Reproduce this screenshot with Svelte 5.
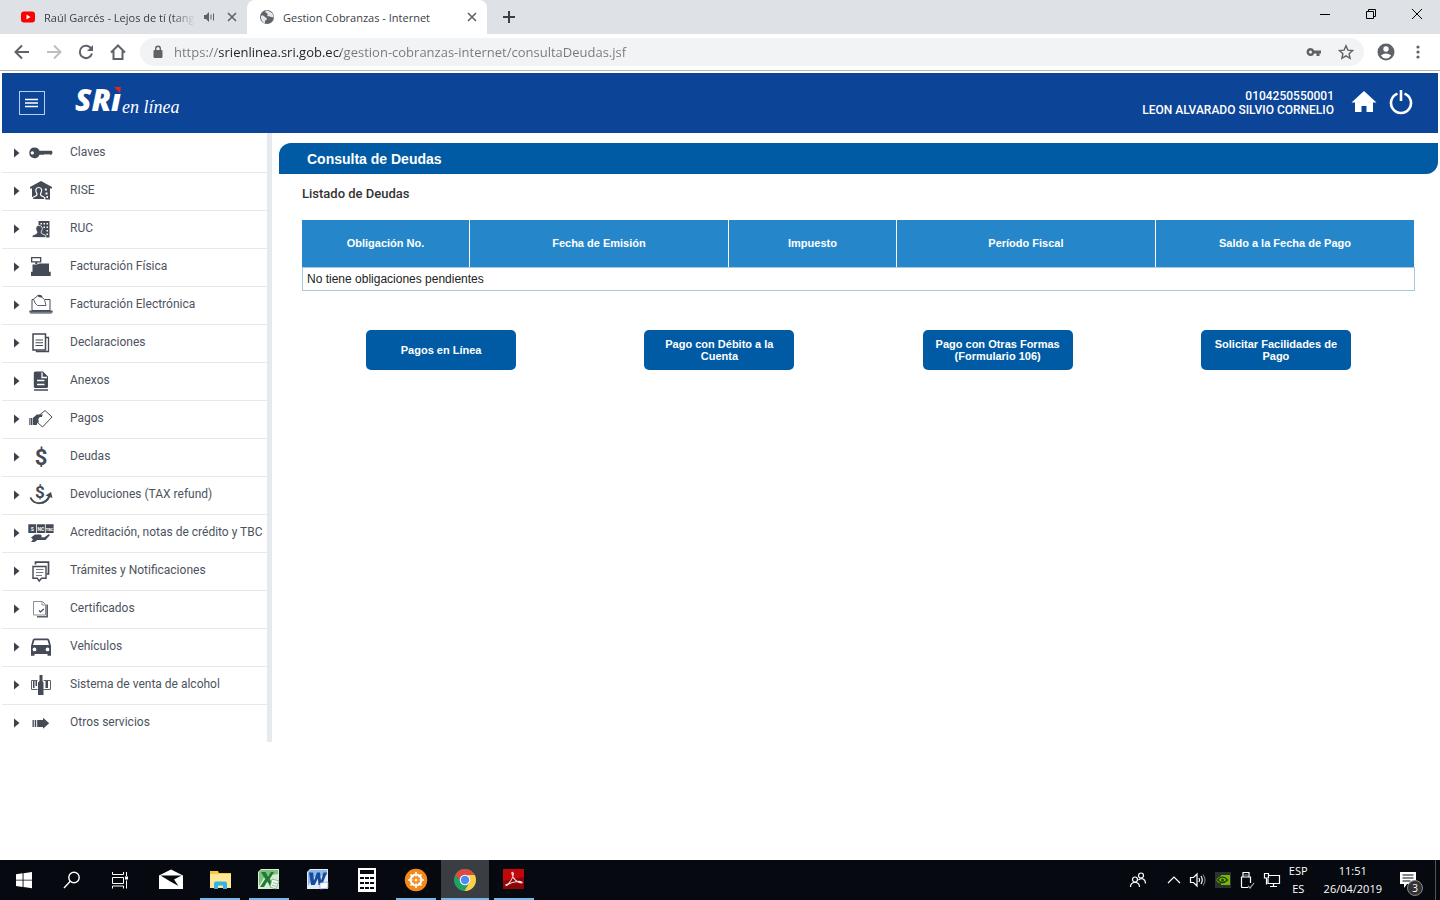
<script lang="ts">
    const url = 'https://srienlinea.sri.gob.ec/gestion-cobranzas-internet/consultaDeudas.jsf';

    const menu = [
        {
            label: 'Claves',
            icon: '<path fill-rule="evenodd" d="M6.500 7.500a5.300 5.300 0 0 1 5 3.300H24l.5 2-1 2h-1.500l-1-1-1 1.200-1-1.200-1 1.200-1-1.200-1 1h-4.500a5.300 5.300 0 1 1-5-7.300zM4.300 11.200a1.700 1.700 0 1 0 0 3.400 1.700 1.700 0 0 0 0-3.400z"/>'
        },
        {
            label: 'RISE',
            icon: '<path d="M2 9 L13 3 L24 9 V10.500 H2z M4 10h18v11.500H4z"/><path d="M16.800 10.500h2v2h-2zM17.500 14.500h2v2h-2zM18.500 18H20v2h-1.500z" fill="#fff"/><path d="M10.700 9.500c-2.500 0-3.200 2-2.700 4l1 2.500-.5 1.500-4 2v2h12.300v-2l-3.800-2-.5-1.500 1-2.500c.5-2-.3-4-2.800-4z" stroke="#fff" stroke-width="1.200"/>'
        },
        {
            label: 'RUC',
            icon: '<path d="M10.500 5h11v16.500h-11z"/><path d="M12.500 7h1.500v1.500h-1.500zM15.500 7H17v1.500h-1.500zM18.500 7H20v1.500h-1.500zM15.500 10.500H17V12h-1.500zM18.500 10.500H20V12h-1.500zM18.500 14H20v1.500h-1.500zM18.500 17.500H20V19h-1.500z" fill="#fff"/><path d="M10.800 9.500c-2.600 0-3.300 2-2.900 4l1.100 2.700-.5 1.300-4.300 2v2h13.600v-2l-4.200-2-.5-1.300 1.100-2.700c.5-2-.4-4-3.400-4z" stroke="#fff" stroke-width=".8"/>'
        },
        {
            label: 'Facturación Física',
            icon: '<path fill-rule="evenodd" d="M3 3h10.300v5.500H3zM4.300 4.300v2.900h7.700V4.300z"/><path d="M7.300 8h2v2h-2z"/><path d="M4.500 10.500h4l3-1H21v8.200h1.700v4.200H3v-4.200h1.500z"/>'
        },
        {
            label: 'Facturación Electrónica',
            icon: '<path d="M6 7.500H4v11h18v-11h-5" fill="none" stroke="#444a56"/><path d="M5.500 7l4-3 3.500.5 3.500 3 1.500 6H9.500L7 11z" fill="#fff" stroke="#5b616b"/><path d="M9 3.500c2-1.500 5-.5 5.500 1.500l-2.500.5z"/><path d="M1.500 19h23v1.300l-1 1.500H2.500l-1-1.500z" fill="#767b84"/><path d="M1.500 18.500h23v1.200h-23z"/>'
        },
        {
            label: 'Declaraciones',
            icon: '<path d="M18 7.500h2.500v14h-12V20" fill="none" stroke="#444a56" stroke-width="1.300"/><path d="M5 4h12.500v16H5z" fill="none" stroke="#444a56" stroke-width="1.500"/><path d="M7.500 9.500h7.500v1H7.500zM7.500 12.200h7.500v1H7.500zM7.500 15h7.500v1H7.500z"/>'
        },
        {
            label: 'Anexos',
            icon: '<path d="M7 3.500h8l5 5v10q0 1.500-1.500 1.500H7.300q-1.500 0-1.500-1.500V5q0-1.500 1.500-1.500zM6 21.300h14v1.400H6z"/><path d="M14 4.500v5h5M9 12.500h7.500M9 16.500h7.500" fill="none" stroke="#fff" stroke-width="1.300"/>'
        },
        {
            label: 'Pagos',
            icon: '<path d="M11 9.500l6-5 7 6.500-9.500 10-6-5.500" fill="none" stroke="#444a56"/><path d="M1.300 12h1.200v7H1.300zM3 12h1.200v7H3zM4.800 12l4-3.500h6l-1 2.500h-2l-1.500 2 .5 3-1.500 1-.5 2h-4z"/>'
        },
        {
            label: 'Deudas',
            icon: '<text x="13" y="21" font-size="22" font-weight="700" text-anchor="middle">$</text>'
        },
        {
            label: 'Devoluciones (TAX refund)',
            icon: '<text x="12" y="16" font-size="17" font-weight="700" text-anchor="middle">$</text><path d="M2.500 15.500c3 7.500 15 8 19-1.500" fill="none" stroke="#444a56" stroke-width="2"/><path d="M17.500 13.500l5.500-3.500 1.500 6z"/>'
        },
        {
            label: 'Acreditación, notas de crédito y TBC',
            icon: '<path d="M.3 4.300h7.900V13H.3zM9 4.300h7.900V13H9zM17.700 4.300h7.900V13h-7.900z"/><g fill="#fff" font-size="5" font-weight="700" text-anchor="middle"><text x="4.300" y="10.500">S</text><text x="13" y="10.500">NC</text><text x="21.600" y="10.500" font-size="4">TBC</text></g><path d="M3 17.500l4-3h5.500l1.500 1.500-1 1.200h3.500l4-3 1.500.8-4.500 5h-8l-3 2H3l2-2.500z"/>'
        },
        {
            label: 'Trámites y Notificaciones',
            icon: '<path d="M7.500 6.500V4.200h13V16h-2" fill="none" stroke="#444a56" stroke-width="1.700"/><path d="M5 8.500h13v11.700h-4.500l-2.300 2.800-2-2.800H5z" fill="none" stroke="#444a56" stroke-width="1.400"/><path d="M8 11.500h7.500M8 14.500h7.500M8 17.500h6" fill="none" stroke="#777c86"/>'
        },
        {
            label: 'Certificados',
            icon: '<path d="M5.500 5.500h9l3 3V19h-12z" fill="none" stroke="#8a8e96"/><path d="M14 5.500v3.500h3.500" fill="none" stroke="#8a8e96"/><path d="M18.300 8.500H20v13H9V20h9.300z" fill="#5b616b"/><path d="M11 14.500l1.500 1.500 3.300-3" fill="none" stroke="#444a56" stroke-width="1.200"/>'
        },
        {
            label: 'Vehículos',
            icon: '<path fill-rule="evenodd" d="M6 4.500h14l1.300 1.200L23 12v9.700h-3.500V20h-13v1.700H3V12l1.700-6.300zM6.500 6.300L5 11h16l-1.500-4.700zM6.500 13.500a1.900 1.900 0 1 0 0 3.800 1.900 1.900 0 0 0 0-3.800zM19.500 13.500a1.900 1.900 0 1 0 0 3.800 1.900 1.900 0 0 0 0-3.800z"/>'
        },
        {
            label: 'Sistema de venta de alcohol',
            icon: '<path d="M9.500 8.500h-6v9h6M15.500 8.500h7v9h-7" fill="none" stroke="#5b616b"/><path d="M5 9h1.500v7H5zM7.500 9H9v5H7.500zM17.500 9h2.500v7h-2.500zM11.500 3h3v6l1 1.500V23H10V10.500L11.500 9z"/>'
        },
        {
            label: 'Otros servicios',
            icon: '<path d="M4.500 10h1.300v7H4.500zM6.700 10h1.500v7H6.700zM9.200 10H15V7.700l6.200 5.600L15 18.700V17H9.200z"/>'
        }
    ];

    const columns = ['Obligación No.', 'Fecha de Emisión', 'Impuesto', 'Período Fiscal', 'Saldo a la Fecha de Pago'];

    const actions = [
        'Pagos en Línea',
        'Pago con Débito a la Cuenta',
        'Pago con Otras Formas (Formulario 106)',
        'Solicitar Facilidades de Pago'
    ];

    const system = [
        { name: 'Inicio', art: '<path d="M4 6.300l6.600-1v6.400H4zM11.500 5.200L20 4v7.700h-8.500zM4 12.600h6.600V19L4 18zM11.500 12.600H20v7.700L11.500 19z" fill="#fff"/>' },
        { name: 'Buscar', art: '<g fill="none" stroke="#fff" stroke-width="1.400"><circle cx="14" cy="9.500" r="5.200"/><path d="M10.300 13.300L4 20"/></g>' },
        { name: 'Vista de tareas', art: '<g fill="none" stroke="#fff"><path d="M4.500 4v2.500h11V4M4.500 9.500h11v6h-11zM4.500 20.500v-2.500h11v2.500M18.500 4v4M18.500 12.500v8"/></g><path d="M17 8.500h3v3h-3z" fill="#fff"/>' }
    ];

    const apps = [
        { name: 'Correo', open: false, active: false, art: '<path d="M0 7.500l12-6 12 6V21H0z" fill="#fff"/><path d="M1.500 7.500h21l-7.500 4 4.500 6.500-9-5z" fill="#060a10"/>' },
        { name: 'Explorador', open: true, active: false, art: '<path d="M2 3h8l1 2h12v15H2z" fill="#f5c842"/><path d="M2 6h21v14H2z" fill="#ffe793"/><path d="M6 21v-5.500q0-2 2-2h9q2 0 2 2V21h-4v-3.500h-5V21z" fill="#38b0e8"/>' },
        { name: 'Excel', open: true, active: false, art: '<path d="M4 1h18v20H1V4z" fill="#d8ecd5"/><path d="M4 2h17v4L8 8 2 18V4z" fill="#7cc27c"/><path d="M4 4h4.500l2.500 4.500L14 4h3l-4.200 7 5.200 8h-4.500l-3.200-5.500L7 19H3l5.200-8z" fill="#237a33"/><path d="M15 11l7 2-3 8-6-2zM16 14.500l4 1.300M15 17l4 1.300" fill="#f3f9f1" stroke="#73ae77" stroke-width=".8"/>' },
        { name: 'Word', open: false, active: false, art: '<path d="M4 1h18v20H1V4z" fill="#e3edf9"/><path d="M4 2h17v5L8 9 2 18V4z" fill="#8db6e8"/><path d="M3 4.500h4l1 8 3-8h3l1 8 2.500-8H21l-5 12.500h-3.500l-.7-6.500-3 6.500H5z" fill="#164ba0"/><path d="M14 15l8-1v6l-8 1z" fill="#fff" stroke="#7aa2d8" stroke-width=".7"/>' },
        { name: 'Calculadora', open: false, active: false, art: '<path d="M3 0h18v24H3z" fill="#fff"/><path d="M5 2h14v4H5zM5 9h4v2H5zM10 9h4v2h-4zM15 9h4v2h-4zM5 14h4v2H5zM10 14h4v2h-4zM15 14h4v2h-4zM5 19h4v2H5zM10 19h4v2h-4zM15 19h4v2h-4z" fill="#060a10"/>' },
        { name: 'Timón', open: true, active: false, art: '<circle cx="12" cy="12" r="11.200" fill="#f58a1c"/><g fill="none" stroke="#fff"><circle cx="12" cy="12" r="5.500" stroke-width="2"/><path d="M12 4v16M4 12h16M6.500 6.500l11 11M17.500 6.500l-11 11" stroke-width="1.600"/></g><circle cx="12" cy="12" r="3.500" fill="#f58a1c"/><circle cx="12" cy="12" r="1.500" fill="#fff"/>' },
        { name: 'Chrome', open: true, active: true, art: '<circle cx="12" cy="12" r="11" fill="#1ea362"/><path d="M2.500 6.500A11 11 0 0 1 21.500 6.500L12 8l-4.500 6z" fill="#dd4b3e"/><path d="M21.800 7A11 11 0 0 1 11.500 23L16.500 14.500 14.500 7z" fill="#ffce44"/><circle cx="12" cy="12" r="5.300" fill="#fff"/><circle cx="12" cy="12" r="4.200" fill="#4c8bf5"/>' },
        { name: 'Acrobat', open: true, active: false, art: '<path d="M1 1h21v20H1z" fill="#8c0508"/><path d="M1 1h21v8L1 13z" fill="#c4070b"/><path d="M4 17c4-2 7-7 7.500-11.500q-2-2.500-1.500.5c1 5 5 8.500 9.500 9 2-1-1.500-2-4-1.500-5 .5-8 1.500-11 4-.8-.5-1-1-.5-.5z" fill="none" stroke="#f6dede" stroke-width="1.100"/>' }
    ];
</script>

<div class="screen">
    <header class="tabs">
        <div class="tab first">
            <svg width="16" height="16" viewBox="0 0 16 16"><rect x="1" y="2.500" width="14" height="11" rx="3" fill="#f00" /><path d="M6.500 5.500v5l4-2.500z" fill="#fff" /></svg>
            <span class="tab-name faded">Raúl Garcés - Lejos de tí (tang</span>
            <svg width="12" height="12" viewBox="0 0 12 12"><path d="M1 4h2l3-3v10L3 8H1z" fill="#5f6368" /><path d="M8 3.500v5M10.500 2.500v7" stroke="#5f6368" /></svg>
            <button class="close" aria-label="Cerrar pestaña"><svg width="10" height="10" viewBox="0 0 10 10"><path d="M1 1l8 8M9 1l-8 8" /></svg></button>
        </div>
        <div class="tab current">
            <svg width="16" height="16" viewBox="0 0 16 16"><circle cx="8" cy="8" r="7" fill="#5f6368" /><path d="M2 7c2-1 3 0 4 1s2 1 2 2-2 1-2 2 0 2-.5 2.500C3 13 1.500 10 2 7zM7 1.500c-1 1-1 2 .5 2.500S9 6 8 7l3 .5c1 1 2 .5 3.500 1 .3-3-2-6.500-7.500-7z" fill="#e4e6e8" /></svg>
            <span class="tab-name">Gestion Cobranzas - Internet</span>
            <button class="close" aria-label="Cerrar pestaña"><svg width="10" height="10" viewBox="0 0 10 10"><path d="M1 1l8 8M9 1l-8 8" /></svg></button>
        </div>
        <button class="new-tab" aria-label="Nueva pestaña"><svg width="12" height="12" viewBox="0 0 12 12"><path d="M6 0v12M0 6h12" stroke="#3c4043" stroke-width="2" /></svg></button>
        <div class="window-controls">
            <button aria-label="Minimizar"><svg width="12" height="12" viewBox="0 0 12 12"><path d="M1 6.500h10" /></svg></button>
            <button aria-label="Restaurar"><svg width="12" height="12" viewBox="0 0 12 12"><path d="M1.500 3.500h7v7h-7zM3.500 3.500v-2h7v7h-2" /></svg></button>
            <button aria-label="Cerrar"><svg width="12" height="12" viewBox="0 0 12 12"><path d="M1 1l10 10M11 1L1 11" /></svg></button>
        </div>
    </header>

    <nav class="toolbar" aria-label="Navegador">
        <button aria-label="Atrás"><svg width="16" height="16" viewBox="0 0 16 16"><path d="M15 8H2M8 1.500L1.500 8 8 14.500" /></svg></button>
        <button class="off" aria-label="Adelante"><svg width="16" height="16" viewBox="0 0 16 16"><path d="M1 8h13M8 1.500L14.500 8 8 14.500" /></svg></button>
        <button aria-label="Recargar"><svg width="16" height="16" viewBox="0 0 16 16"><path d="M13.500 5A6.200 6.200 0 1 0 14 9.500" /><path d="M15 1v6H9z" fill="#5f6368" stroke="none" /></svg></button>
        <button aria-label="Página principal"><svg width="16" height="16" viewBox="0 0 16 16"><path d="M1 8.500L8 1.500l7 7M3.500 7v8h9V7" /></svg></button>
        <div class="omnibox">
            <svg width="12" height="14" viewBox="0 0 12 14"><path d="M2.500 5h7q1 0 1 1v6q0 1-1 1h-7q-1 0-1-1V6q0-1 1-1z" fill="#5f6368" /><path d="M3.700 5V3.500a2.300 2.300 0 0 1 4.600 0V5" fill="none" stroke="#5f6368" stroke-width="1.400" /></svg>
            <input type="text" value={url} aria-label="Dirección" />
            <svg width="16" height="16" viewBox="0 0 16 16"><path fill-rule="evenodd" d="M4.500 4a4 4 0 0 1 3.800 2.500H15v3h-1.500V12h-3V9.500H8.300A4 4 0 1 1 4.500 4zm0 2.500a1.500 1.500 0 1 0 0 3 1.500 1.500 0 0 0 0-3z" fill="#5f6368" /></svg>
            <svg width="16" height="16" viewBox="0 0 16 16"><path d="M8 1.800l1.900 4.300 4.700.5-3.500 3.100 1 4.600L8 11.900l-4.100 2.400 1-4.600L1.400 6.600l4.700-.5z" fill="none" stroke="#5f6368" stroke-width="1.400" /></svg>
        </div>
        <button class="account" aria-label="Perfil"><svg width="18" height="18" viewBox="0 0 18 18"><circle cx="9" cy="9" r="8.500" fill="#5f6368" stroke="none" /><circle cx="9" cy="6" r="2.700" fill="#fff" stroke="none" /><path d="M3.800 12.500q5.200-4 10.400 0-2 3-5.200 3t-5.200-3z" fill="#fff" stroke="none" /></svg></button>
        <button class="more" aria-label="Menú"><svg width="4" height="16" viewBox="0 0 4 16"><g fill="#5f6368" stroke="none"><circle cx="2" cy="3" r="1.600" /><circle cx="2" cy="8" r="1.600" /><circle cx="2" cy="13" r="1.600" /></g></svg></button>
    </nav>

    <div class="page">
        <header class="banner">
            <button class="burger" aria-label="Mostrar menú"><svg width="14" height="10" viewBox="0 0 14 10"><path d="M0 1.500h13M0 5h13M0 8.500h13" stroke="#fff" stroke-width="1.700" /></svg></button>
            <svg class="logo" width="110" height="44" viewBox="0 0 110 44" role="img" aria-label="SRi en línea">
                <text x="1" y="30" class="sri">SRı</text>
                <path d="M40 6h7l-1 6z" fill="#e1251b" />
                <text x="48" y="32" class="script">en línea</text>
            </svg>
            <div class="user">0104250550001<br />LEON ALVARADO SILVIO CORNELIO</div>
            <a href="#inicio" aria-label="Inicio"><svg width="26" height="24" viewBox="0 0 26 24"><path d="M13 0l12.500 11.500H22V21h-6.500v-6h-5v6H4v-9.500H.5z" fill="#fff" /></svg></a>
            <a href="#salir" aria-label="Salir"><svg width="24" height="26" viewBox="0 0 24 26"><path d="M8.500 3.600a10 10 0 1 0 7 0M12 0v11" fill="none" stroke="#fff" stroke-width="2.600" /></svg></a>
        </header>

        <div class="body">
            <nav class="sidebar" aria-label="Servicios">
                {#each menu as item}
                    <a href="#menu">
                        <svg class="arrow" width="6" height="10" viewBox="0 0 6 10"><path d="M0 .5l5.500 4.500L0 9.500z" fill="#3b414d" /></svg>
                        <svg class="icon" width="26" height="26" viewBox="0 0 26 26">{@html item.icon}</svg>
                        <span>{item.label}</span>
                    </a>
                {/each}
            </nav>

            <main>
                <h1>Consulta de Deudas</h1>
                <section>
                    <h2>Listado de Deudas</h2>
                    <table>
                        <thead>
                            <tr>
                                {#each columns as column}
                                    <th>{column}</th>
                                {/each}
                            </tr>
                        </thead>
                        <tbody>
                            <tr><td colspan={columns.length}>No tiene obligaciones pendientes</td></tr>
                        </tbody>
                    </table>
                    <div class="actions">
                        {#each actions as action}
                            <button>{action}</button>
                        {/each}
                    </div>
                </section>
            </main>
        </div>
    </div>

    <footer class="taskbar">
        <div class="system">
            {#each system as item}
                <button aria-label={item.name}><svg width="24" height="24" viewBox="0 0 24 24">{@html item.art}</svg></button>
            {/each}
        </div>
        <div class="apps">
            {#each apps as app}
                <button class:open={app.open} class:active={app.active} aria-label={app.name}><svg width="24" height="24" viewBox="0 0 24 24">{@html app.art}</svg></button>
            {/each}
        </div>
        <div class="tray">
            <svg class="people" width="18" height="18" viewBox="0 0 18 18"><circle cx="6" cy="8.500" r="2.500" /><path d="M1.500 16c0-6 9-6 9 0" /><circle cx="12" cy="4.500" r="2.500" /><path d="M9.500 9c3-3 7-1 7 3.500" /></svg>
            <svg width="14" height="14" viewBox="0 0 14 14"><path d="M1 10l6-6 6 6" /></svg>
            <svg width="18" height="16" viewBox="0 0 18 16"><path d="M1.500 5.500h3L8 2v12l-3.500-3.500h-3zM10 6q1.200 2 0 4M12 4q2.500 4 0 8" /><path d="M14 2.500q4 5.500 0 11" stroke="#777" /></svg>
            <svg width="16" height="16" viewBox="0 0 16 16"><path d="M0 0h16v16H0z" fill="#2b3234" stroke="none" /><path d="M6 3h9v10H6z" fill="#76b900" stroke="none" /><path d="M1 8q3-4 6-4 4 0 7 4-3 3.500-7 3.500T1 8z" fill="#76b900" stroke="none" /><path d="M2.500 8q5-6 10 0-5 5-10 0z" stroke="#1d3305" fill="none" /><circle cx="7.500" cy="8" r="1.300" fill="#1d3305" stroke="none" /></svg>
            <svg width="16" height="18" viewBox="0 0 16 18"><path d="M4 6V1.500h6V6M9 16.500H3.500q-1 0-1-1V6h9v6M6 3.500v1M8 3.500v1" /><path d="M9 15l2 2 4-5" stroke="#aaa" /></svg>
            <svg width="18" height="16" viewBox="0 0 18 16"><path d="M6 3.500h10.500v8H5V7M1.500 1.500h4V6h-4zM3.500 6v6.500M10.500 11.500v3M7 14.500h7" /></svg>
            <div class="lang">ESP<br />ES</div>
            <div class="clock">11:51<br />26/04/2019</div>
            <div class="notices">
                <svg width="18" height="18" viewBox="0 0 18 18"><path d="M1 1h16v12H8l-3 4v-4H1z" fill="#fff" stroke="none" /><path d="M3.500 4h11M3.500 7h11M3.500 10h8" stroke="#060a10" /></svg>
                <span>3</span>
            </div>
        </div>
    </footer>
</div>

<style>
    :global(body) {
        background: #fff;
    }
    .screen {
        display: flex;
        flex-direction: column;
        min-height: 100vh;
        font-family: Roboto, sans-serif;
    }
    button {
        padding: 0;
        border: 0;
        background: none;
        cursor: pointer;
    }
    svg {
        display: block;
        flex: none;
    }

    /* browser */
    .tabs {
        display: flex;
        height: 34px;
        background: #dee1e6;
        font-family: "Open Sans", sans-serif;
        font-size: 11px;
        color: #3c4043;
    }
    .tab {
        display: flex;
        align-items: center;
        box-sizing: border-box;
        width: 240px;
        gap: 8px;
        padding: 0 10px 0 12px;
    }
    .tab.first {
        width: 247px;
        padding-left: 20px;
    }
    .tab.current {
        background: #fff;
        border-radius: 8px 8px 0 0;
    }
    .tab-name {
        flex: 1;
        white-space: nowrap;
    }
    .faded {
        mask-image: linear-gradient(90deg, #000 85%, transparent);
    }
    .close {
        padding-left: 4px;
    }
    .close svg {
        stroke: #5f6368;
        stroke-width: 1.6;
    }
    .new-tab {
        width: 44px;
        display: grid;
        place-items: center;
    }
    .window-controls {
        display: flex;
        margin-left: auto;
    }
    .window-controls button {
        width: 46px;
        height: 28px;
        display: grid;
        place-items: center;
    }
    .window-controls svg {
        fill: none;
        stroke: #000;
    }
    .toolbar {
        display: flex;
        align-items: center;
        height: 36px;
        padding: 0 6px;
        border-bottom: 1px solid #b6b4b8;
    }
    .toolbar button {
        width: 32px;
        height: 28px;
        display: grid;
        place-items: center;
    }
    .toolbar button svg {
        fill: none;
        stroke: #5f6368;
        stroke-width: 2;
    }
    .toolbar .off svg {
        stroke: #bcbec1;
    }
    .omnibox {
        flex: 1;
        display: flex;
        align-items: center;
        gap: 16px;
        height: 28px;
        margin: 0 6px;
        padding: 0 10px 0 12px;
        border-radius: 14px;
        background: #f1f3f4;
    }
    /* the host name is darker than the rest of the address */
    .omnibox input {
        flex: 1;
        min-width: 0;
        margin-left: -6px;
        padding: 0;
        border: 0;
        outline: 0;
        font: 13px "Open Sans", sans-serif;
        color: transparent;
        background: linear-gradient(90deg, #73797e 44px, #202124 44px, #202124 167px, #73797e 167px);
        background-clip: text;
    }

    /* page */
    .page {
        flex: 1;
        padding: 2px 2px 0;
    }
    .banner {
        display: flex;
        align-items: center;
        height: 60px;
        padding: 0 25px 0 17px;
        background: #0c4497;
    }
    .burger {
        width: 26px;
        height: 24px;
        display: grid;
        place-items: center;
        border: 1px solid #b9cdf0;
        margin-right: 29px;
    }
    .logo {
        margin-right: auto;
    }
    .sri {
        font: italic 800 30px "Open Sans", sans-serif;
        fill: #fff;
    }
    .script {
        font: italic 18px "Liberation Serif", serif;
        fill: #fff;
    }
    .user {
        font-size: 12px;
        font-weight: 500;
        line-height: 14px;
        text-align: right;
        color: #fff;
        margin-right: 5px;
    }
    .banner a {
        margin-left: 12px;
    }
    .body {
        display: flex;
        align-items: flex-start;
    }
    .sidebar {
        flex: none;
        width: 265px;
        padding-top: 2px;
        border-right: 5px solid #e6eaee;
    }
    .sidebar a {
        display: flex;
        align-items: center;
        height: 36px;
        padding: 0 0 1px 12px;
        border-bottom: 1px solid #e6e8ea;
        font-size: 12px;
        color: #4d535e;
        text-decoration: none;
        white-space: nowrap;
    }
    .sidebar a:last-child {
        border-bottom: 0;
    }
    .icon {
        margin: 0 16px 0 8px;
        fill: #444a56;
    }
    .sidebar span {
        padding-bottom: 3px;
    }
    main {
        flex: 1;
        padding: 10px 0 0 7px;
        font-family: "Liberation Sans", Arial, sans-serif;
    }
    h1 {
        margin: 0;
        padding: 1px 0 0 28px;
        border-radius: 12px 0 12px 0;
        background: #005ba4;
        color: #fff;
        font-size: 14px;
        line-height: 30px;
    }
    section {
        padding: 12px 23px 0;
    }
    h2 {
        margin: 0 0 18px;
        font: 500 13px/16px Roboto, sans-serif;
        color: #333;
    }
    table {
        width: 100%;
        table-layout: fixed;
        border-spacing: 0;
    }
    th {
        height: 45px;
        padding: 0 0 2px;
        background: #2587ca;
        border-right: 1px solid #fff;
        color: #fff;
        font-size: 11px;
    }
    th:nth-child(odd):not(:last-child) {
        width: 15%;
    }
    td {
        height: 22px;
        padding: 0 4px;
        border: 1px solid #a6c9e2;
        font-size: 12px;
        color: #222;
    }
    .actions {
        display: grid;
        grid-template-columns: repeat(4, 1fr);
        justify-items: center;
        margin-top: 39px;
    }
    .actions button {
        width: 150px;
        height: 40px;
        padding: 0 8px;
        border-radius: 5px;
        background: #005ba4;
        color: #fff;
        font: bold 11px/12px "Liberation Sans", Arial, sans-serif;
    }

    /* taskbar */
    .taskbar {
        display: flex;
        height: 40px;
        background: #060a10;
        color: #fff;
    }
    .system,
    .apps {
        display: flex;
    }
    .apps {
        gap: 1px;
        margin-left: 3px;
    }
    .taskbar button {
        display: grid;
        place-items: center;
        width: 48px;
        height: 40px;
    }
    .taskbar .open {
        background: linear-gradient(#76b9ed, #76b9ed) bottom / 40px 2px no-repeat;
    }
    .taskbar .active {
        background: linear-gradient(#76b9ed, #76b9ed) bottom / 48px 2px no-repeat #3a3d41;
    }
    .tray {
        display: flex;
        align-items: center;
        gap: 8px;
        margin-left: auto;
        margin-right: 4px;
        padding-right: 12px;
        border-right: 1px solid #555;
        font: 11px/18px "Open Sans", sans-serif;
        text-align: center;
    }
    .tray > svg,
    .notices svg {
        fill: none;
        stroke: #fff;
        stroke-width: 1.2;
    }
    .people {
        margin-right: 12px;
    }
    .clock {
        margin: 0 9px 0 8px;
    }
    .notices {
        position: relative;
        padding-right: 6px;
    }
    .notices span {
        position: absolute;
        right: 0;
        bottom: -7px;
        width: 14px;
        height: 14px;
        border: 1px solid #888;
        border-radius: 50%;
        background: #333;
        font-size: 10px;
        line-height: 14px;
    }
</style>
